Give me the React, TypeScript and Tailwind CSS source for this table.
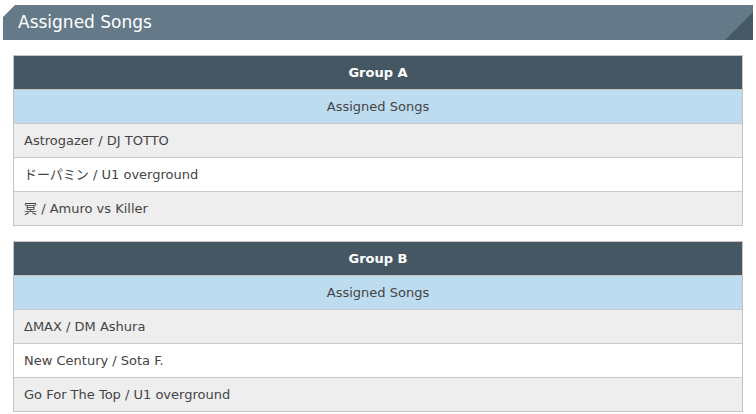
const GROUPS = [
  {
    name: 'Group A',
    songs: ['Astrogazer / DJ TOTTO', 'ドーパミン / U1 overground', '冥 / Amuro vs Killer'],
  },
  {
    name: 'Group B',
    songs: ['ΔMAX / DM Ashura', 'New Century / Sota F.', 'Go For The Top / U1 overground'],
  },
]

const FONT = "font-['DejaVu_Sans','Noto_Sans_CJK_JP',sans-serif]"

function GroupTable({ name, songs }: { name: string; songs: string[] }) {
  return (
    <div className="border border-[#c4c4c4] flex flex-col">
      <div className="h-[33px] bg-[#465764] text-white font-bold text-[13px] flex items-center justify-center">
        {name}
      </div>
      <div className="h-[34px] border-t border-[#c4c4c4] bg-[#bddcf0] text-[#444] text-[13px] flex items-center justify-center">
        Assigned Songs
      </div>
      {songs.map((s, i) => (
        <div
          key={s}
          className={`h-[34px] border-t border-[#c9c9c9] text-[#444] text-[13px] flex items-center pl-[10px] ${i % 2 === 0 ? 'bg-[#eeeeee]' : 'bg-white'}`}
        >
          {s}
        </div>
      ))}
    </div>
  )
}

export default function App() {
  return (
    <div className={`w-[756px] h-[414px] bg-white overflow-hidden ${FONT}`}>
      <div className="pt-[5px] px-[3px]">
        <div className="relative h-[35px] bg-[#647a89] flex items-center pl-[15px] [clip-path:polygon(12px_0,100%_0,100%_100%,0_100%,0_12px)]">
          <span className="text-white text-[17px] leading-none">Assigned Songs</span>
          <span className="absolute right-0 bottom-0 w-[28px] h-[28px] bg-[#475866] [clip-path:polygon(100%_0,100%_100%,0_100%)]" />
        </div>
      </div>
      <div className="mt-[15px] ml-[13px] w-[730px] flex flex-col gap-[15px]">
        {GROUPS.map((g) => (
          <GroupTable key={g.name} name={g.name} songs={g.songs} />
        ))}
      </div>
    </div>
  )
}
